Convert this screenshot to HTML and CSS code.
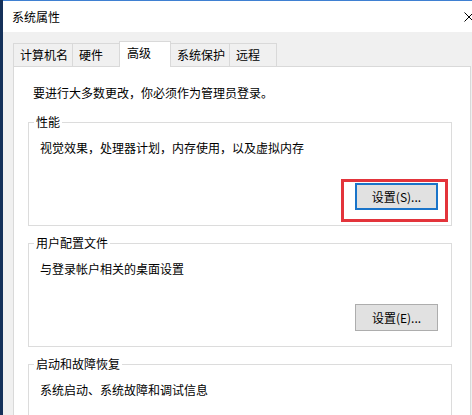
FILE: index.html
```html
<!DOCTYPE html>
<html lang="zh-CN">
<head>
    <meta charset="UTF-8">
    <meta name="viewport" content="width=device-width, initial-scale=1.0">
    <title>系统属性</title>
    <link rel="stylesheet" href="styles.css">
</head>
<body>

    <div class="window">
        <!-- 标题栏 -->
        <div class="titlebar">
            <span class="title">系统属性</span>
            <svg class="close" width="10" height="10" viewBox="0 0 10 10">
                <path d="M0.5 0.5L9.5 9.5M9.5 0.5L0.5 9.5" stroke="#000" stroke-width="1" fill="none"/>
            </svg>
        </div>

        <div class="content">
            <!-- 选项卡 -->
            <div class="tabs">
                <div class="tab tab-wide">计算机名</div>
                <div class="tab">硬件</div>
                <div class="tab tab-active">高级</div>
                <div class="tab tab-wide">系统保护</div>
                <div class="tab">远程</div>
            </div>

            <div class="panel">
                <p class="notice">要进行大多数更改，你必须作为管理员登录。</p>

                <fieldset class="group">
                    <legend>性能</legend>
                    <p class="desc">视觉效果，处理器计划，内存使用，以及虚拟内存</p>
                    <div class="actions">
                        <span class="mark">
                            <button class="btn btn-default">设置(S)...</button>
                        </span>
                    </div>
                </fieldset>

                <fieldset class="group">
                    <legend>用户配置文件</legend>
                    <p class="desc">与登录帐户相关的桌面设置</p>
                    <div class="actions">
                        <button class="btn">设置(E)...</button>
                    </div>
                </fieldset>

                <fieldset class="group group-last">
                    <legend>启动和故障恢复</legend>
                    <p class="desc">系统启动、系统故障和调试信息</p>
                </fieldset>
            </div>
        </div>
    </div>

</body>
</html>
```

FILE: styles.css
```css
/* 页面背景（桌面） */
body {
    margin: 0;
    background: #15315a;
    font-family: "Noto Sans CJK SC", "Microsoft YaHei", sans-serif;
    font-size: 12px;
    color: #000;
    overflow: hidden;
}

/* 窗口 */
.window {
    margin-left: 3px;
    width: 480px;
    height: 430px;
    border-top: 1px solid #3f80d2;
    background: #f0f0f0;
}

.titlebar {
    height: 31px;
    background: #fff;
    display: flex;
    align-items: center;
    justify-content: space-between;
    padding: 0 9px;
}

.title {
    line-height: 16px;
}

.content {
    padding: 9px 10px 0;
}

/* 选项卡 */
.tabs {
    display: flex;
    align-items: flex-end;
    height: 26px;
    margin-bottom: -1px;
}

.tab {
    box-sizing: border-box;
    width: 48px;
    height: 24px;
    line-height: 22px;
    padding-left: 6px;
    margin-left: -1px;
    border: 1px solid #d9d9d9;
    background: #f0f0f0;
    white-space: nowrap;
}

.tab:first-child {
    margin-left: 0;
}

.tab-wide {
    width: 60px;
}

.tab-active {
    position: relative;
    z-index: 1;
    width: 52px;
    height: 26px;
    padding-left: 7px;
    border-bottom: none;
    background: #fff;
}

/* 内容面板 */
.panel {
    box-sizing: border-box;
    width: 458px;
    height: 420px;
    padding: 18px 18px 0 14px;
    background: #fff;
    border: 1px solid #d9d9d9;
}

.notice {
    margin: 0 0 13px 5px;
    line-height: 16px;
}

/* 分组框 */
.group {
    margin: 0 0 9px;
    padding: 0 13px 15px 11px;
    border: 1px solid #dcdcdc;
    min-width: 0;
}

.group-last {
    padding-bottom: 60px;
}

.group legend {
    padding: 0 2px;
    margin-left: -6px;
    line-height: 16px;
}

.desc {
    margin: 10px 0 0;
    line-height: 16px;
}

.actions {
    display: flex;
    justify-content: flex-end;
    margin-top: 27px;
}

/* 按钮 */
.btn {
    box-sizing: border-box;
    width: 83px;
    height: 27px;
    padding: 0;
    font-family: inherit;
    font-size: 12px;
    color: #000;
    background: #e1e1e1;
    border: 1px solid #adadad;
}

.btn-default {
    border: 2px solid #1a74c9;
}

/* 红色标注框 */
.mark {
    position: relative;
    display: inline-block;
    line-height: 0;
}

.mark::after {
    content: "";
    position: absolute;
    left: -14px;
    top: -4px;
    right: -10px;
    bottom: -12px;
    border: 3px solid #e3343b;
}
```
